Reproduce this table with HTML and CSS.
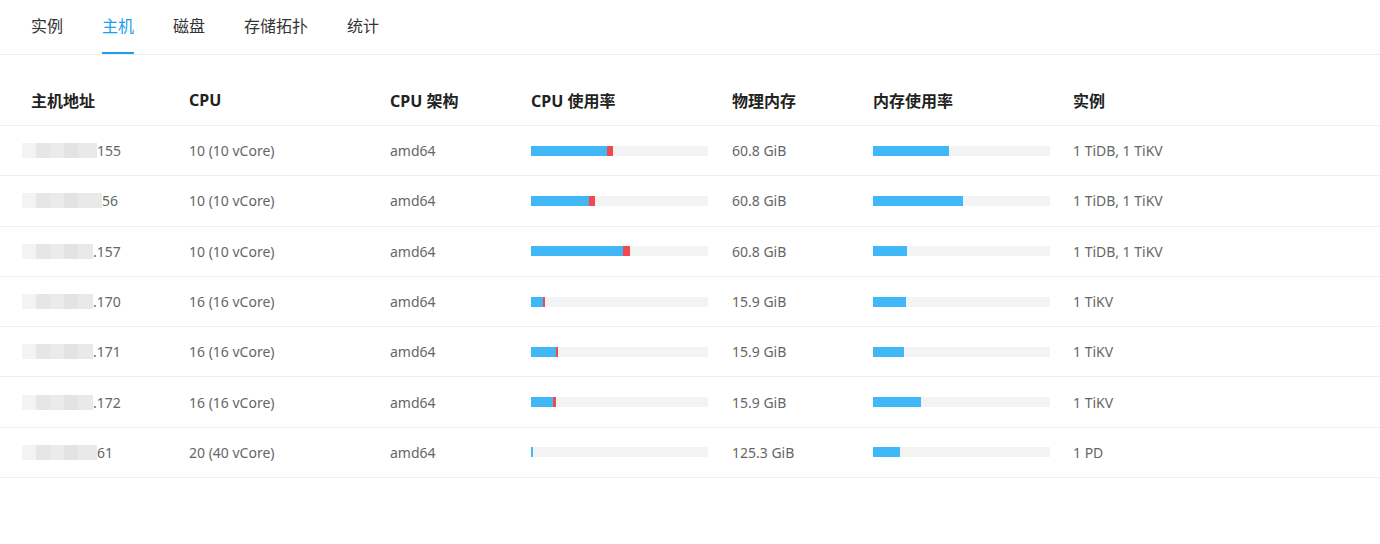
FILE: index.html
```html
<!DOCTYPE html>
<html lang="zh-CN">
<head>
  <meta charset="UTF-8" />
  <title>主机</title>
  <link rel="stylesheet" href="styles.css">
</head>
<body>
  <!-- TABS -->
  <nav class="tabs">
    <a class="tab">实例</a>
    <a class="tab active">主机</a>
    <a class="tab">磁盘</a>
    <a class="tab">存储拓扑</a>
    <a class="tab">统计</a>
  </nav>

  <!-- HOST TABLE -->
  <section class="table">
    <div class="row head">
      <div>主机地址</div>
      <div>CPU</div>
      <div>CPU 架构</div>
      <div>CPU 使用率</div>
      <div>物理内存</div>
      <div>内存使用率</div>
      <div>实例</div>
    </div>

    <div class="row">
      <div class="ip"><span class="mask wide"></span>155</div>
      <div>10 (10 vCore)</div>
      <div>amd64</div>
      <div><div class="bar"><i class="used" style="width:76px"></i><i class="sys" style="width:6px"></i></div></div>
      <div>60.8 GiB</div>
      <div><div class="bar"><i class="used" style="width:76px"></i></div></div>
      <div>1 TiDB, 1 TiKV</div>
    </div>

    <div class="row">
      <div class="ip"><span class="mask wider"></span>56</div>
      <div>10 (10 vCore)</div>
      <div>amd64</div>
      <div><div class="bar"><i class="used" style="width:58px"></i><i class="sys" style="width:6px"></i></div></div>
      <div>60.8 GiB</div>
      <div><div class="bar"><i class="used" style="width:90px"></i></div></div>
      <div>1 TiDB, 1 TiKV</div>
    </div>

    <div class="row">
      <div class="ip"><span class="mask"></span>.157</div>
      <div>10 (10 vCore)</div>
      <div>amd64</div>
      <div><div class="bar"><i class="used" style="width:92px"></i><i class="sys" style="width:7px"></i></div></div>
      <div>60.8 GiB</div>
      <div><div class="bar"><i class="used" style="width:34px"></i></div></div>
      <div>1 TiDB, 1 TiKV</div>
    </div>

    <div class="row">
      <div class="ip"><span class="mask"></span>.170</div>
      <div>16 (16 vCore)</div>
      <div>amd64</div>
      <div><div class="bar"><i class="used" style="width:12px"></i><i class="sys" style="width:2px"></i></div></div>
      <div>15.9 GiB</div>
      <div><div class="bar"><i class="used" style="width:33px"></i></div></div>
      <div>1 TiKV</div>
    </div>

    <div class="row">
      <div class="ip"><span class="mask"></span>.171</div>
      <div>16 (16 vCore)</div>
      <div>amd64</div>
      <div><div class="bar"><i class="used" style="width:25px"></i><i class="sys" style="width:2px"></i></div></div>
      <div>15.9 GiB</div>
      <div><div class="bar"><i class="used" style="width:31px"></i></div></div>
      <div>1 TiKV</div>
    </div>

    <div class="row">
      <div class="ip"><span class="mask"></span>.172</div>
      <div>16 (16 vCore)</div>
      <div>amd64</div>
      <div><div class="bar"><i class="used" style="width:22px"></i><i class="sys" style="width:3px"></i></div></div>
      <div>15.9 GiB</div>
      <div><div class="bar"><i class="used" style="width:48px"></i></div></div>
      <div>1 TiKV</div>
    </div>

    <div class="row">
      <div class="ip"><span class="mask wide"></span>61</div>
      <div>20 (40 vCore)</div>
      <div>amd64</div>
      <div><div class="bar"><i class="used" style="width:2px"></i></div></div>
      <div>125.3 GiB</div>
      <div><div class="bar"><i class="used" style="width:27px"></i></div></div>
      <div>1 PD</div>
    </div>
  </section>
</body>
</html>
```

FILE: styles.css
```css
body{margin:0;padding:0;background:#fff;font-family:"Noto Sans","Noto Sans CJK SC",sans-serif;color:#333}

/* tabs */
.tabs{display:flex;gap:39px;padding-left:31px;border-bottom:1px solid #ececec}
.tab{display:block;font-size:16px;line-height:22px;padding:15px 0;border-bottom:2px solid transparent;color:#333;cursor:pointer}
.tab.active{color:#1b9ef0;border-bottom-color:#1b9ef0}

/* table */
.table{margin-top:20px}
.row{display:grid;grid-template-columns:158px 201px 141px 201px 141px 200px 1fr;align-items:center;padding-left:31px;height:49.3px;border-bottom:1px solid #eeeeee;font-size:14px;color:#666}
.row.head{height:50px;font-size:16px;font-weight:bold;color:#222}
.ip{display:flex;align-items:center}
.mask{display:inline-block;width:71px;height:15px;margin-left:-9px;filter:blur(.6px);
  background:linear-gradient(90deg,#f3f3f3 0 14px,#e6e6e6 14px 28px,#ebebeb 28px 42px,#e3e3e3 42px 56px,#e9e9e9 56px)}
.mask.wide{width:75px}
.mask.wider{width:80px}

/* usage bars */
.bar{display:flex;width:177px;height:10px;background:#f3f3f3}
.bar i{display:block;height:100%}
.bar .used{background:#3fb8f5}
.bar .sys{background:#f5484d}
```
